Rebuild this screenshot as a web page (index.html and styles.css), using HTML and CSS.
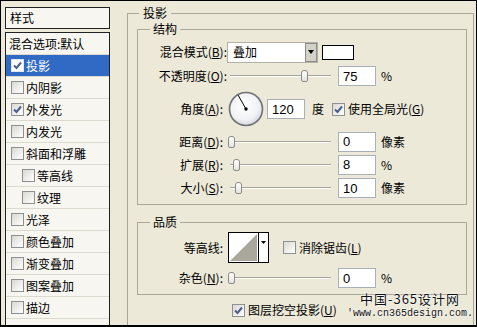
FILE: index.html
```html
<!DOCTYPE html>
<html lang="zh-CN">

<head>
    <meta charset="UTF-8">
    <meta name="viewport" content="width=device-width, initial-scale=1.0">
    <title>图层样式</title>
    <link rel="stylesheet" href="styles.css">
</head>

<body>
    <div class="frame">

        <!-- 左侧样式列表 -->
        <div class="side">
            <div class="side-head">样式</div>
            <ul class="style-list">
                <li class="plain">混合选项:默认</li>
                <li class="sel"><span class="cb"><svg viewBox="0 0 11 11"><path d="M2 5.5l2.5 2.5 4.5-5.5"/></svg></span>投影</li>
                <li><span class="cb"></span>内阴影</li>
                <li><span class="cb"><svg viewBox="0 0 11 11"><path d="M2 5.5l2.5 2.5 4.5-5.5"/></svg></span>外发光</li>
                <li><span class="cb"></span>内发光</li>
                <li><span class="cb"></span>斜面和浮雕</li>
                <li class="sub"><span class="cb"></span>等高线</li>
                <li class="sub"><span class="cb"></span>纹理</li>
                <li><span class="cb"></span>光泽</li>
                <li><span class="cb"></span>颜色叠加</li>
                <li><span class="cb"></span>渐变叠加</li>
                <li><span class="cb"></span>图案叠加</li>
                <li><span class="cb"></span>描边</li>
            </ul>
        </div>

        <!-- 投影设置 -->
        <fieldset class="group outer">
            <legend>投影</legend>

            <fieldset class="group sub-group struct">
                <legend>结构</legend>

                <div class="row h24">
                    <span class="lbl wide">混合模式(<u>B</u>):</span>
                    <div class="select">
                        <span class="select-text">叠加</span>
                        <span class="select-btn"><i class="arrow"></i></span>
                    </div>
                    <span class="swatch"></span>
                </div>

                <div class="row h24">
                    <span class="lbl wide">不透明度(<u>O</u>):</span>
                    <div class="slider near"><span class="thumb" style="left: 73px"></span></div>
                    <input class="num" type="text" value="75">
                    <span class="unit">%</span>
                </div>

                <div class="row h42">
                    <span class="lbl">角度(<u>A</u>):</span>
                    <svg class="dial" width="36" height="36" viewBox="0 0 36 36">
                        <defs>
                            <radialGradient id="dialFill" cx="45%" cy="40%" r="60%">
                                <stop offset="0" stop-color="#ffffff"/>
                                <stop offset="0.7" stop-color="#f1f2f6"/>
                                <stop offset="1" stop-color="#d6d9e2"/>
                            </radialGradient>
                        </defs>
                        <circle cx="18" cy="18" r="16.5" fill="url(#dialFill)" stroke="#6f7174" stroke-width="1.6"/>
                        <line x1="18" y1="18" x2="10" y2="4" stroke="#000" stroke-width="1"/>
                        <circle cx="18" cy="18" r="1.7" fill="#000"/>
                    </svg>
                    <input class="num angle" type="text" value="120">
                    <span class="unit deg">度</span>
                    <span class="cb global"><svg viewBox="0 0 11 11"><path d="M2 5.5l2.5 2.5 4.5-5.5"/></svg></span>
                    <span class="cb-text">使用全局光(<u>G</u>)</span>
                </div>

                <div class="row h23">
                    <span class="lbl">距离(<u>D</u>):</span>
                    <div class="slider"><span class="thumb" style="left: 0px"></span></div>
                    <input class="num" type="text" value="0">
                    <span class="unit">像素</span>
                </div>

                <div class="row h23">
                    <span class="lbl">扩展(<u>R</u>):</span>
                    <div class="slider"><span class="thumb" style="left: 5px"></span></div>
                    <input class="num" type="text" value="8">
                    <span class="unit">%</span>
                </div>

                <div class="row h24">
                    <span class="lbl">大小(<u>S</u>):</span>
                    <div class="slider"><span class="thumb" style="left: 7px"></span></div>
                    <input class="num" type="text" value="10">
                    <span class="unit">像素</span>
                </div>
            </fieldset>

            <fieldset class="group sub-group quality">
                <legend>品质</legend>

                <div class="row h31">
                    <span class="lbl">等高线:</span>
                    <svg class="contour" width="41" height="31" viewBox="0 0 41 31">
                        <rect x="0.5" y="0.5" width="40" height="30" fill="#fff" stroke="#000"/>
                        <polygon points="2,29 29,2 29,29" fill="#aaa89c"/>
                        <line x1="30.5" y1="1" x2="30.5" y2="30" stroke="#000"/>
                        <polygon points="33,9 38,9 35.5,12" fill="#000"/>
                    </svg>
                    <span class="cb anti"></span>
                    <span class="cb-text">消除锯齿(<u>L</u>)</span>
                </div>

                <div class="row h24 noise">
                    <span class="lbl">杂色(<u>N</u>):</span>
                    <div class="slider"><span class="thumb" style="left: 0px"></span></div>
                    <input class="num" type="text" value="0">
                    <span class="unit">%</span>
                </div>
            </fieldset>

            <div class="row knock">
                <span class="cb"><svg viewBox="0 0 11 11"><path d="M2 5.5l2.5 2.5 4.5-5.5"/></svg></span>
                <span class="cb-text">图层挖空投影(<u>U</u>)</span>
            </div>
        </fieldset>

        <!-- 水印 -->
        <div class="mark">
            <div class="mark-cn">中国-365设计网</div>
            <div class="mark-url">'www.cn365design.com.</div>
        </div>

    </div>
</body>

</html>
```

FILE: styles.css
```css
html,
body {
    margin: 0;
    padding: 0;
}

body {
    background-color: #ece9d8;
    font-family: "Noto Sans CJK SC", "Liberation Sans", sans-serif;
    font-size: 12px;
    line-height: 14px;
    color: #000;
}

u {
    text-decoration: underline;
    text-underline-offset: 1px;
}

.frame {
    position: relative;
    display: flex;
    width: 477px;
    height: 327px;
    box-sizing: border-box;
    border: 1px solid #000;
    border-bottom-width: 2px;
    background-color: #ece9d8;
    overflow: hidden;
}

/* 左侧列表 */
.side {
    display: flex;
    flex-direction: column;
    width: 105px;
    margin: 6px 0 0 4px;
    flex: none;
}

.side-head {
    height: 22px;
    box-sizing: border-box;
    border: 1px solid #222;
    background-color: #f7f6f1;
    padding-left: 4px;
    line-height: 20px;
}

.style-list {
    flex: 1;
    margin: 3px 0 0;
    padding: 0;
    list-style: none;
    border: 1px solid #222;
    border-bottom: 0;
    background-color: #f7f6f1;
}

.style-list>li {
    display: flex;
    align-items: center;
    height: 22px;
    box-sizing: border-box;
    padding-left: 5px;
    border-bottom: 1px solid #dcd9ce;
}

.style-list>li.plain {
    padding-left: 3px;
}

.style-list>li.sub {
    padding-left: 16px;
}

.style-list>li.sel {
    background-color: #316ac5;
    color: #fff;
}

/* 复选框 */
.cb {
    display: inline-flex;
    align-items: center;
    justify-content: center;
    width: 13px;
    height: 13px;
    box-sizing: border-box;
    border: 1px solid #8d8f91;
    background: linear-gradient(135deg, #d9d9d2, #ffffff);
    margin-right: 2px;
    flex: none;
}

.cb svg {
    width: 11px;
    height: 11px;
}

.cb svg path {
    fill: none;
    stroke: #4b5f8c;
    stroke-width: 2;
}

.sel .cb {
    border-color: #e0e6f4;
    background: #fff;
}

.cb-text {
    margin-left: 1px;
    white-space: nowrap;
}

/* 分组框 */
fieldset.group {
    margin: 0;
    padding: 0;
    min-width: 0;
    border: 1px solid #aaa898;
}

fieldset.group>legend {
    padding: 0 3px;
    margin-left: 12px;
    line-height: 14px;
}

fieldset.outer {
    width: 347px;
    height: 319px;
    box-sizing: border-box;
    margin: 5px 2px 0 17px;
    border-bottom: 0;
    flex: none;
}

fieldset.outer>legend {
    padding: 0 4px;
    margin-left: 11px;
}

fieldset.sub-group {
    margin: 0 6px 0 9px;
}

fieldset.struct {
    margin-top: 2px;
    padding: 4px 0 4px;
}

fieldset.quality {
    margin-top: 10px;
    padding: 3px 0 4px;
}

/* 行 */
.row {
    display: flex;
    align-items: center;
}

.h23 {
    height: 23px;
}

.h24 {
    height: 24px;
}

.h31 {
    height: 31px;
}

.h42 {
    height: 42px;
}

.noise {
    margin-top: 3px;
}

.lbl {
    width: 85px;
    flex: none;
    text-align: right;
    white-space: nowrap;
}

.lbl.wide {
    width: 89px;
}

/* 下拉框 */
.select {
    display: flex;
    align-items: center;
    width: 91px;
    height: 21px;
    box-sizing: border-box;
    border: 1px solid #b2b0a2;
    background-color: #fff;
}

.select-text {
    flex: 1;
    padding-left: 5px;
}

.select-btn {
    display: flex;
    align-items: center;
    justify-content: center;
    width: 12px;
    height: 19px;
    box-sizing: border-box;
    border: 1px solid #8c8c8c;
    background-color: #d4d2c8;
}

.arrow {
    width: 0;
    height: 0;
    border-left: 3px solid transparent;
    border-right: 3px solid transparent;
    border-top: 4px solid #000;
}

.swatch {
    width: 32px;
    height: 15px;
    box-sizing: border-box;
    margin-left: 4px;
    border: 1px solid #000;
    background-color: #fff;
}

/* 滑块 */
.slider {
    position: relative;
    width: 103px;
    height: 12px;
    margin-left: 5px;
    flex: none;
}

.slider.near {
    margin-left: 1px;
}

.slider::before {
    content: "";
    position: absolute;
    left: 2px;
    right: 0;
    top: 5px;
    height: 1px;
    background-color: #a5a39a;
    border-bottom: 1px solid #fff;
}

.thumb {
    position: absolute;
    top: 0;
    width: 7px;
    height: 12px;
    box-sizing: border-box;
    border: 1px solid #8a8a86;
    border-radius: 3px 3px 2px 2px;
    background: linear-gradient(#ffffff, #e4e3dc);
}

/* 输入框 */
.num {
    width: 38px;
    height: 20px;
    box-sizing: border-box;
    margin: 0 0 0 7px;
    padding: 0 0 0 4px;
    border: 1px solid #a9b0b8;
    background-color: #fff;
    font-family: "Liberation Sans", sans-serif;
    font-size: 13px;
    color: #000;
    outline: none;
}

.num.angle {
    margin-left: 3px;
}

.unit {
    margin-left: 5px;
    white-space: nowrap;
}

.unit.deg {
    margin-left: 7px;
}

.dial {
    margin-left: 5px;
    flex: none;
}

.cb.global {
    margin-left: 8px;
}

.contour {
    margin-left: 5px;
    flex: none;
}

.cb.anti {
    margin-left: 14px;
}

.knock {
    height: 22px;
    margin-top: 4px;
    padding-left: 104px;
}

/* 水印 */
.mark {
    position: absolute;
    left: 344px;
    top: 290px;
    width: 130px;
    text-align: center;
    white-space: nowrap;
    color: #111;
    text-shadow: 0 0 2px #fff, 0 0 2px #fff;
}

.mark-cn {
    font-size: 13px;
    line-height: 16px;
    letter-spacing: 1px;
}

.mark-url {
    font-family: "Liberation Mono", monospace;
    font-size: 10px;
    line-height: 14px;
}
```
